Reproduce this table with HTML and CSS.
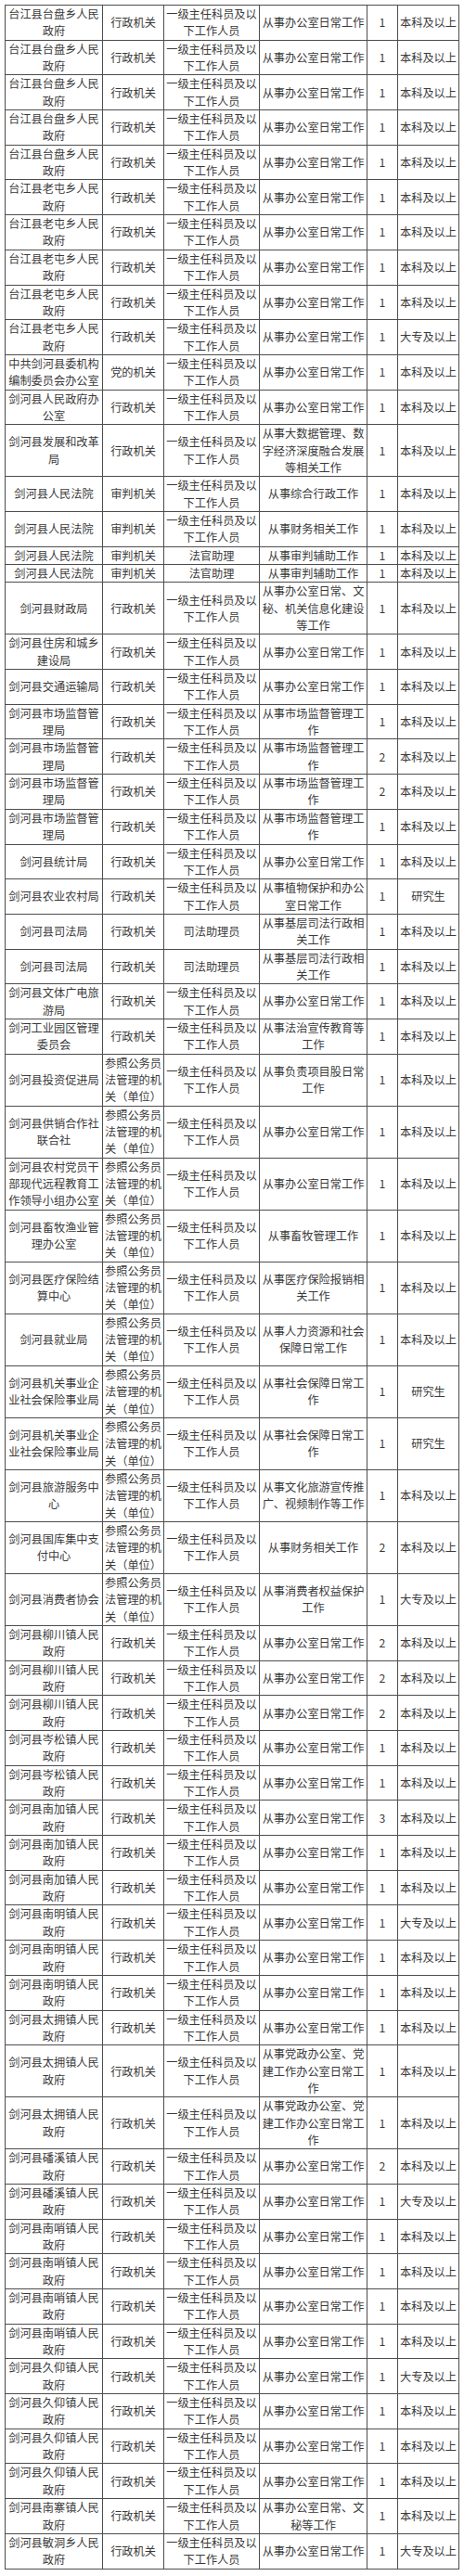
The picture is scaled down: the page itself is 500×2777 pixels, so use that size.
FILE: index.html
```html
<!DOCTYPE html>
<html lang="zh-CN">
<head>
<meta charset="utf-8">
<title>职位表</title>
<link rel="stylesheet" href="styles.css">
</head>
<body>
<table class="jobs">
<colgroup>
<col class="c-unit"><col class="c-type"><col class="c-pos"><col class="c-duty"><col class="c-num"><col class="c-edu">
</colgroup>
<tbody>
<tr><td>台江县台盘乡人民政府</td><td>行政机关</td><td>一级主任科员及以下工作人员</td><td>从事办公室日常工作</td><td>1</td><td>本科及以上</td></tr>
<tr><td>台江县台盘乡人民政府</td><td>行政机关</td><td>一级主任科员及以下工作人员</td><td>从事办公室日常工作</td><td>1</td><td>本科及以上</td></tr>
<tr><td>台江县台盘乡人民政府</td><td>行政机关</td><td>一级主任科员及以下工作人员</td><td>从事办公室日常工作</td><td>1</td><td>本科及以上</td></tr>
<tr><td>台江县台盘乡人民政府</td><td>行政机关</td><td>一级主任科员及以下工作人员</td><td>从事办公室日常工作</td><td>1</td><td>本科及以上</td></tr>
<tr><td>台江县台盘乡人民政府</td><td>行政机关</td><td>一级主任科员及以下工作人员</td><td>从事办公室日常工作</td><td>1</td><td>本科及以上</td></tr>
<tr><td>台江县老屯乡人民政府</td><td>行政机关</td><td>一级主任科员及以下工作人员</td><td>从事办公室日常工作</td><td>1</td><td>本科及以上</td></tr>
<tr><td>台江县老屯乡人民政府</td><td>行政机关</td><td>一级主任科员及以下工作人员</td><td>从事办公室日常工作</td><td>1</td><td>本科及以上</td></tr>
<tr><td>台江县老屯乡人民政府</td><td>行政机关</td><td>一级主任科员及以下工作人员</td><td>从事办公室日常工作</td><td>1</td><td>本科及以上</td></tr>
<tr><td>台江县老屯乡人民政府</td><td>行政机关</td><td>一级主任科员及以下工作人员</td><td>从事办公室日常工作</td><td>1</td><td>本科及以上</td></tr>
<tr><td>台江县老屯乡人民政府</td><td>行政机关</td><td>一级主任科员及以下工作人员</td><td>从事办公室日常工作</td><td>1</td><td>大专及以上</td></tr>
<tr><td>中共剑河县委机构编制委员会办公室</td><td>党的机关</td><td>一级主任科员及以下工作人员</td><td>从事办公室日常工作</td><td>1</td><td>本科及以上</td></tr>
<tr><td>剑河县人民政府办公室</td><td>行政机关</td><td>一级主任科员及以下工作人员</td><td>从事办公室日常工作</td><td>1</td><td>本科及以上</td></tr>
<tr><td>剑河县发展和改革局</td><td>行政机关</td><td>一级主任科员及以下工作人员</td><td>从事大数据管理、数字经济深度融合发展等相关工作</td><td>1</td><td>本科及以上</td></tr>
<tr><td>剑河县人民法院</td><td>审判机关</td><td>一级主任科员及以下工作人员</td><td>从事综合行政工作</td><td>1</td><td>本科及以上</td></tr>
<tr><td>剑河县人民法院</td><td>审判机关</td><td>一级主任科员及以下工作人员</td><td>从事财务相关工作</td><td>1</td><td>本科及以上</td></tr>
<tr><td>剑河县人民法院</td><td>审判机关</td><td>法官助理</td><td>从事审判辅助工作</td><td>1</td><td>本科及以上</td></tr>
<tr><td>剑河县人民法院</td><td>审判机关</td><td>法官助理</td><td>从事审判辅助工作</td><td>1</td><td>本科及以上</td></tr>
<tr><td>剑河县财政局</td><td>行政机关</td><td>一级主任科员及以下工作人员</td><td>从事办公室日常、文秘、机关信息化建设等工作</td><td>1</td><td>本科及以上</td></tr>
<tr><td>剑河县住房和城乡建设局</td><td>行政机关</td><td>一级主任科员及以下工作人员</td><td>从事办公室日常工作</td><td>1</td><td>本科及以上</td></tr>
<tr><td>剑河县交通运输局</td><td>行政机关</td><td>一级主任科员及以下工作人员</td><td>从事办公室日常工作</td><td>1</td><td>本科及以上</td></tr>
<tr><td>剑河县市场监督管理局</td><td>行政机关</td><td>一级主任科员及以下工作人员</td><td>从事市场监督管理工作</td><td>1</td><td>本科及以上</td></tr>
<tr><td>剑河县市场监督管理局</td><td>行政机关</td><td>一级主任科员及以下工作人员</td><td>从事市场监督管理工作</td><td>2</td><td>本科及以上</td></tr>
<tr><td>剑河县市场监督管理局</td><td>行政机关</td><td>一级主任科员及以下工作人员</td><td>从事市场监督管理工作</td><td>2</td><td>本科及以上</td></tr>
<tr><td>剑河县市场监督管理局</td><td>行政机关</td><td>一级主任科员及以下工作人员</td><td>从事市场监督管理工作</td><td>1</td><td>本科及以上</td></tr>
<tr><td>剑河县统计局</td><td>行政机关</td><td>一级主任科员及以下工作人员</td><td>从事办公室日常工作</td><td>1</td><td>本科及以上</td></tr>
<tr><td>剑河县农业农村局</td><td>行政机关</td><td>一级主任科员及以下工作人员</td><td>从事植物保护和办公室日常工作</td><td>1</td><td>研究生</td></tr>
<tr><td>剑河县司法局</td><td>行政机关</td><td>司法助理员</td><td>从事基层司法行政相关工作</td><td>1</td><td>本科及以上</td></tr>
<tr><td>剑河县司法局</td><td>行政机关</td><td>司法助理员</td><td>从事基层司法行政相关工作</td><td>1</td><td>本科及以上</td></tr>
<tr><td>剑河县文体广电旅游局</td><td>行政机关</td><td>一级主任科员及以下工作人员</td><td>从事办公室日常工作</td><td>1</td><td>本科及以上</td></tr>
<tr><td>剑河工业园区管理委员会</td><td>行政机关</td><td>一级主任科员及以下工作人员</td><td>从事法治宣传教育等工作</td><td>1</td><td>本科及以上</td></tr>
<tr><td>剑河县投资促进局</td><td>参照公务员法管理的机关（单位）</td><td>一级主任科员及以下工作人员</td><td>从事负责项目股日常工作</td><td>1</td><td>本科及以上</td></tr>
<tr><td>剑河县供销合作社联合社</td><td>参照公务员法管理的机关（单位）</td><td>一级主任科员及以下工作人员</td><td>从事办公室日常工作</td><td>1</td><td>本科及以上</td></tr>
<tr><td>剑河县农村党员干部现代远程教育工作领导小组办公室</td><td>参照公务员法管理的机关（单位）</td><td>一级主任科员及以下工作人员</td><td>从事办公室日常工作</td><td>1</td><td>本科及以上</td></tr>
<tr><td>剑河县畜牧渔业管理办公室</td><td>参照公务员法管理的机关（单位）</td><td>一级主任科员及以下工作人员</td><td>从事畜牧管理工作</td><td>1</td><td>本科及以上</td></tr>
<tr><td>剑河县医疗保险结算中心</td><td>参照公务员法管理的机关（单位）</td><td>一级主任科员及以下工作人员</td><td>从事医疗保险报销相关工作</td><td>1</td><td>本科及以上</td></tr>
<tr><td>剑河县就业局</td><td>参照公务员法管理的机关（单位）</td><td>一级主任科员及以下工作人员</td><td>从事人力资源和社会保障日常工作</td><td>1</td><td>本科及以上</td></tr>
<tr><td>剑河县机关事业企业社会保险事业局</td><td>参照公务员法管理的机关（单位）</td><td>一级主任科员及以下工作人员</td><td>从事社会保障日常工作</td><td>1</td><td>研究生</td></tr>
<tr><td>剑河县机关事业企业社会保险事业局</td><td>参照公务员法管理的机关（单位）</td><td>一级主任科员及以下工作人员</td><td>从事社会保障日常工作</td><td>1</td><td>研究生</td></tr>
<tr><td>剑河县旅游服务中心</td><td>参照公务员法管理的机关（单位）</td><td>一级主任科员及以下工作人员</td><td>从事文化旅游宣传推广、视频制作等工作</td><td>1</td><td>本科及以上</td></tr>
<tr><td>剑河县国库集中支付中心</td><td>参照公务员法管理的机关（单位）</td><td>一级主任科员及以下工作人员</td><td>从事财务相关工作</td><td>2</td><td>本科及以上</td></tr>
<tr><td>剑河县消费者协会</td><td>参照公务员法管理的机关（单位）</td><td>一级主任科员及以下工作人员</td><td>从事消费者权益保护工作</td><td>1</td><td>大专及以上</td></tr>
<tr><td>剑河县柳川镇人民政府</td><td>行政机关</td><td>一级主任科员及以下工作人员</td><td>从事办公室日常工作</td><td>2</td><td>本科及以上</td></tr>
<tr><td>剑河县柳川镇人民政府</td><td>行政机关</td><td>一级主任科员及以下工作人员</td><td>从事办公室日常工作</td><td>2</td><td>本科及以上</td></tr>
<tr><td>剑河县柳川镇人民政府</td><td>行政机关</td><td>一级主任科员及以下工作人员</td><td>从事办公室日常工作</td><td>2</td><td>本科及以上</td></tr>
<tr><td>剑河县岑松镇人民政府</td><td>行政机关</td><td>一级主任科员及以下工作人员</td><td>从事办公室日常工作</td><td>1</td><td>本科及以上</td></tr>
<tr><td>剑河县岑松镇人民政府</td><td>行政机关</td><td>一级主任科员及以下工作人员</td><td>从事办公室日常工作</td><td>1</td><td>本科及以上</td></tr>
<tr><td>剑河县南加镇人民政府</td><td>行政机关</td><td>一级主任科员及以下工作人员</td><td>从事办公室日常工作</td><td>3</td><td>本科及以上</td></tr>
<tr><td>剑河县南加镇人民政府</td><td>行政机关</td><td>一级主任科员及以下工作人员</td><td>从事办公室日常工作</td><td>1</td><td>本科及以上</td></tr>
<tr><td>剑河县南加镇人民政府</td><td>行政机关</td><td>一级主任科员及以下工作人员</td><td>从事办公室日常工作</td><td>1</td><td>本科及以上</td></tr>
<tr><td>剑河县南明镇人民政府</td><td>行政机关</td><td>一级主任科员及以下工作人员</td><td>从事办公室日常工作</td><td>1</td><td>大专及以上</td></tr>
<tr><td>剑河县南明镇人民政府</td><td>行政机关</td><td>一级主任科员及以下工作人员</td><td>从事办公室日常工作</td><td>1</td><td>本科及以上</td></tr>
<tr><td>剑河县南明镇人民政府</td><td>行政机关</td><td>一级主任科员及以下工作人员</td><td>从事办公室日常工作</td><td>1</td><td>本科及以上</td></tr>
<tr><td>剑河县太拥镇人民政府</td><td>行政机关</td><td>一级主任科员及以下工作人员</td><td>从事办公室日常工作</td><td>1</td><td>本科及以上</td></tr>
<tr><td>剑河县太拥镇人民政府</td><td>行政机关</td><td>一级主任科员及以下工作人员</td><td>从事党政办公室、党建工作办公室日常工作</td><td>1</td><td>本科及以上</td></tr>
<tr><td>剑河县太拥镇人民政府</td><td>行政机关</td><td>一级主任科员及以下工作人员</td><td>从事党政办公室、党建工作办公室日常工作</td><td>1</td><td>本科及以上</td></tr>
<tr><td>剑河县磻溪镇人民政府</td><td>行政机关</td><td>一级主任科员及以下工作人员</td><td>从事办公室日常工作</td><td>2</td><td>本科及以上</td></tr>
<tr><td>剑河县磻溪镇人民政府</td><td>行政机关</td><td>一级主任科员及以下工作人员</td><td>从事办公室日常工作</td><td>1</td><td>大专及以上</td></tr>
<tr><td>剑河县南哨镇人民政府</td><td>行政机关</td><td>一级主任科员及以下工作人员</td><td>从事办公室日常工作</td><td>1</td><td>本科及以上</td></tr>
<tr><td>剑河县南哨镇人民政府</td><td>行政机关</td><td>一级主任科员及以下工作人员</td><td>从事办公室日常工作</td><td>1</td><td>本科及以上</td></tr>
<tr><td>剑河县南哨镇人民政府</td><td>行政机关</td><td>一级主任科员及以下工作人员</td><td>从事办公室日常工作</td><td>1</td><td>本科及以上</td></tr>
<tr><td>剑河县南哨镇人民政府</td><td>行政机关</td><td>一级主任科员及以下工作人员</td><td>从事办公室日常工作</td><td>1</td><td>本科及以上</td></tr>
<tr><td>剑河县久仰镇人民政府</td><td>行政机关</td><td>一级主任科员及以下工作人员</td><td>从事办公室日常工作</td><td>1</td><td>大专及以上</td></tr>
<tr><td>剑河县久仰镇人民政府</td><td>行政机关</td><td>一级主任科员及以下工作人员</td><td>从事办公室日常工作</td><td>1</td><td>本科及以上</td></tr>
<tr><td>剑河县久仰镇人民政府</td><td>行政机关</td><td>一级主任科员及以下工作人员</td><td>从事办公室日常工作</td><td>1</td><td>本科及以上</td></tr>
<tr><td>剑河县久仰镇人民政府</td><td>行政机关</td><td>一级主任科员及以下工作人员</td><td>从事办公室日常工作</td><td>1</td><td>本科及以上</td></tr>
<tr><td>剑河县南寨镇人民政府</td><td>行政机关</td><td>一级主任科员及以下工作人员</td><td>从事办公室日常、文秘等工作</td><td>1</td><td>本科及以上</td></tr>
<tr><td>剑河县敏洞乡人民政府</td><td>行政机关</td><td>一级主任科员及以下工作人员</td><td>从事办公室日常工作</td><td>1</td><td>大专及以上</td></tr>
</tbody>
</table>
</body>
</html>
```

FILE: styles.css
```css
html, body {
  margin: 0;
  padding: 0;
  background: #ffffff;
}

body {
  padding: 5px 0 0 5px;
  font-family: "Noto Sans CJK SC", "Noto Sans", sans-serif;
  color: #3a3a3a;
}

.jobs {
  border-collapse: collapse;
  table-layout: fixed;
  width: 489px;
  font-size: 12.2px;
  line-height: 18.35px;
}

.c-unit { width: 105px; }
.c-type { width: 66px; }
.c-pos  { width: 103px; }
.c-duty { width: 116px; }
.c-num  { width: 33px; }
.c-edu  { width: 66px; }

.jobs td {
  border: 1px solid #4d4d4d;
  padding: 0;
  text-align: center;
  vertical-align: middle;
  word-break: break-all;
}
```
